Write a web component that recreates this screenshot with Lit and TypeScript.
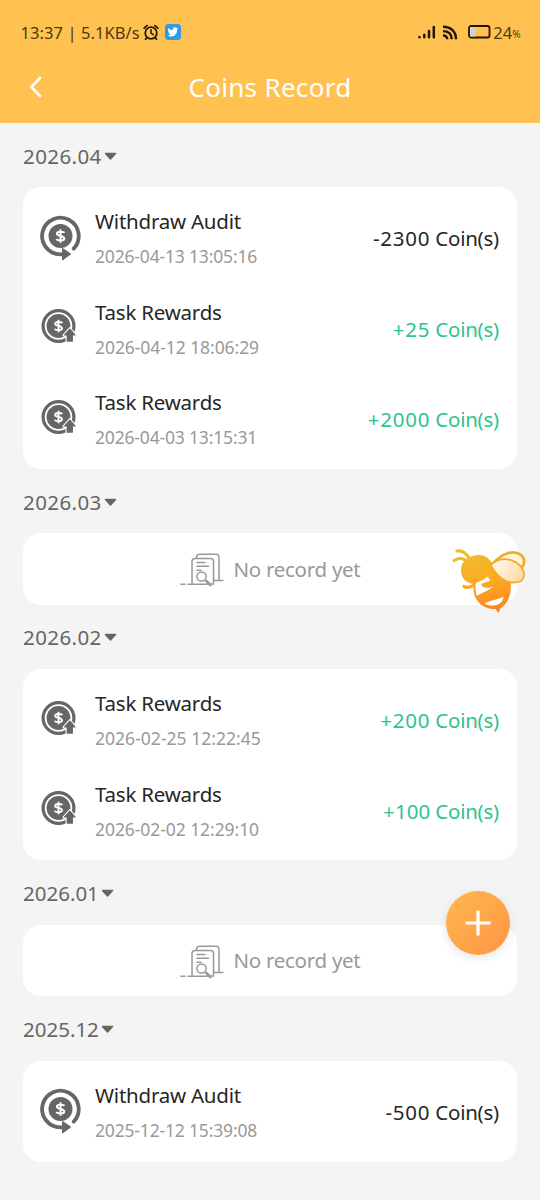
import { LitElement, html, css, svg } from "lit";
import { customElement, property } from "lit/decorators.js";
import { styleMap } from "lit/directives/style-map.js";

interface Entry { kind: "withdraw" | "task"; time: string; amount: number; }
interface Month { label: string; entries: Entry[]; }

const months: Month[] = [
  { label: "2026.04", entries: [
    { kind: "withdraw", time: "2026-04-13 13:05:16", amount: -2300 },
    { kind: "task", time: "2026-04-12 18:06:29", amount: 25 },
    { kind: "task", time: "2026-04-03 13:15:31", amount: 2000 },
  ] },
  { label: "2026.03", entries: [] },
  { label: "2026.02", entries: [
    { kind: "task", time: "2026-02-25 12:22:45", amount: 200 },
    { kind: "task", time: "2026-02-02 12:29:10", amount: 100 },
  ] },
  { label: "2026.01", entries: [] },
  { label: "2025.12", entries: [
    { kind: "withdraw", time: "2025-12-12 15:39:08", amount: -500 },
  ] },
];

// Tightens tracking for every narrow digit "1", giving proportional-looking figures.
const tracking = (text: string, base: number, perOne: number) =>
  styleMap({ letterSpacing: `${(base - perOne * (text.split("1").length - 1)).toFixed(2)}px` });

const dollar = svg`
  <path d="M4.1 -3.2C3.2 -4.6 -3.6 -5.1 -3.6 -2.2C-3.6 .5 3.8 -.6 3.8 2.4C3.8 5.2 -3.2 4.9 -4.2 3.1M0 -6.7V6.7"
    fill="none" stroke="#fff" stroke-width="2"/>`;

const withdrawIcon = html`
  <svg width="44" height="48" viewBox="0 0 44 48">
    <circle cx="22.500" cy="21" r="12" fill="#666"/>
    <g transform="translate(22.500 21)">${dollar}</g>
    <path d="M35.700 33.600A18.300 18.300 0 1 0 22.500 39.300H27" fill="none" stroke="#666" stroke-width="3.800" stroke-linecap="round"/>
    <path d="M24.500 33.400L32.700 39L24.500 45Z" fill="#666" stroke="#666" stroke-width="1" stroke-linejoin="round"/>
  </svg>`;

const taskIcon = html`
  <svg width="44" height="48" viewBox="0 0 44 48">
    <circle cx="20.500" cy="21" r="15.400" fill="none" stroke="#666" stroke-width="3.200"/>
    <circle cx="20.500" cy="21" r="11.900" fill="#666"/>
    <g transform="translate(20.500 21) scale(.93)">${dollar}</g>
    <path d="M31.800 23.500L37.800 30.300H34.800V36.400H28.800V30.300H25.800Z" fill="#666" stroke="#fff" stroke-width="2.600" stroke-linejoin="round" paint-order="stroke"/>
    <path d="M31.800 23.500L37.800 30.300H34.800V36.400H28.800V30.300H25.800Z" fill="#666"/>
  </svg>`;

const emptyIcon = html`
  <svg width="44" height="36" viewBox="0 0 44 36" fill="none" stroke="#999" stroke-width="1.500" stroke-linecap="round" stroke-linejoin="round">
    <path d="M1 32.300H5M8 32.300H27M12 32V9.500Q12 6.500 15 6.500H30.500Q33.500 6.500 33.500 9.500V32H31"/>
    <path d="M16.500 6V5Q16.500 2.300 19.500 2.300H36Q39 2.300 39 5.300V28.400H34M39 28.400H43"/>
    <path d="M17 10.400H25M17 14.200H28.500M17 18.200H21"/>
    <circle cx="21.500" cy="24.500" r="4.600"/>
    <path d="M25 28L26.500 29.300"/><path d="M26.800 29.500L30.300 33" stroke-width="2.800"/>
  </svg>`;

@customElement("status-bar")
class StatusBar extends LitElement {
  static styles = css`
    :host { display: flex; align-items: center; height: 64px; padding: 0 20px 0 20.500px; color: #4d3915;
      font-family: "Noto Sans", "Open Sans", sans-serif; font-size: 16.500px; }
    .clock { letter-spacing: .08px; white-space: pre; }
    .alarm { margin-left: 3px; }
    .bird { margin-left: 6px; }
    .signal { margin-left: auto; }
    .cast { margin-left: 6px; }
    .battery { margin-left: 10px; margin-right: 2px; }
    .pct { font-size: 10px; margin-top: 4px; letter-spacing: -.5px; }
    svg { flex: none; }
  `;
  render() {
    return html`
      <span class="clock">13:37 | 5.1KB/s</span>
      <svg class="alarm" width="16" height="17" viewBox="0 0 16 17" fill="none" stroke="#22190a" stroke-width="1.800" stroke-linecap="round">
        <circle cx="8" cy="9" r="5.800"/><path d="M8 5.800V9.200L10.300 10.600" stroke-width="1.500"/>
        <path d="M1.200 4.200L4 1.600M14.800 4.200L12 1.600M3.700 14L2.600 15.200M12.300 14L13.400 15.200"/>
      </svg>
      <svg class="bird" width="16" height="16" viewBox="0 0 16 16">
        <rect width="16" height="16" rx="3.500" fill="#2d9be8"/>
        <path d="M13.200 4.700L12 5.900C12.200 9.500 9.500 12.400 6 12.400C4.700 12.400 3.500 12 2.700 11.400C4 11.500 5 11.100 5.800 10.500C4.800 10.400 4 9.700 3.700 8.800H4.700C3.700 8.500 3 7.600 3 6.500L4 6.800C3 6 2.800 4.900 3.400 3.900C4.500 5.200 6 6 7.800 6.100C7.400 4.400 8.600 3.200 9.900 3.200C10.600 3.200 11.200 3.500 11.600 3.900L13 3.500L12.200 4.700Z" fill="#fff"/>
      </svg>
      <svg class="signal" width="18" height="14" viewBox="0 0 18 14" stroke="#211707" stroke-width="2.500" stroke-linecap="round">
        <path d="M1.500 12.300V12M6.300 12.300V9.700M11 12.300V6M15.800 12.300V2"/>
      </svg>
      <svg class="cast" width="16" height="15" viewBox="0 0 16 15" fill="none" stroke="#211707" stroke-width="2.400">
        <path d="M1 1.800C9 1.800 14 6.500 14 14.200M1 6.100C6.500 6.100 9.700 9 9.700 14.200M1 10.500C4 10.500 5.300 12 5.300 14.200"/>
      </svg>
      <svg class="battery" width="23" height="14" viewBox="0 0 23 14">
        <rect x="1" y="1" width="20.500" height="11.500" rx="2" fill="#ffc14f" stroke="#211707" stroke-width="1.800"/>
        <rect x="2" y="2" width="5.500" height="9.500" fill="#d5d1c6"/>
      </svg>
      <span>24</span><span class="pct">%</span>`;
  }
}

@customElement("record-row")
class RecordRow extends LitElement {
  @property({ attribute: false }) entry!: Entry;
  static styles = css`
    :host { display: flex; align-items: center; height: 90.350px; }
    .icon { height: 48px; margin: 2px 13px 0 0; flex: none; }
    .text { display: flex; flex-direction: column; gap: 8px; flex: 1; padding-top: 1px; }
    .name { font-size: 20.500px; line-height: 28px; color: #262626; letter-spacing: -.23px; }
    .time { font-size: 17.500px; line-height: 26px; color: #999; }
    .amount { font-size: 20.500px; line-height: 28px; color: #262626; margin-top: 1px; letter-spacing: -.25px; }
    .gain { color: #2dc48b; }
  `;
  render() {
    const { kind, time, amount } = this.entry;
    const figure = `${amount > 0 ? "+" : ""}${amount}`;
    return html`
      <div class="icon">${kind === "withdraw" ? withdrawIcon : taskIcon}</div>
      <div class="text">
        <span class="name">${kind === "withdraw" ? "Withdraw Audit" : "Task Rewards"}</span>
        <span class="time" style=${tracking(time, 0.13, 0.1)}>${time}</span>
      </div>
      <span class="amount ${amount > 0 ? "gain" : ""}"><span style=${tracking(figure, 0.75, 0.7)}>${figure}</span> Coin(s)</span>`;
  }
}

@customElement("app-root")
class AppRoot extends LitElement {
  static styles = css`
    :host { display: block; position: relative; height: 1200px; overflow: hidden; background: #f4f4f4;
      font-family: "Noto Sans", "Open Sans", sans-serif; }
    header { height: 123px; background: #ffc14f; }
    .nav { display: grid; grid-template-columns: 72px 1fr 72px; align-items: center; height: 46px; }
    .back { margin-left: 28px; display: block; }
    h1 { margin: -1px 0 0; text-align: center; color: #fff; font-size: 26px; line-height: 36px; font-weight: 400; letter-spacing: .3px; }
    main { padding: 0 23px; }
    .month { display: flex; align-items: center; gap: 2.500px; height: 62.400px; padding-top: 2px; color: #666; font-size: 20.500px; line-height: 28px; }
    .month span { margin-top: -1px; }
    .card { background: #fff; border-radius: 18px; padding: 5.300px 18px 5.300px 15px; }
    .empty { display: flex; align-items: center; justify-content: center; gap: 10px; height: 71.400px; padding: 0; color: #999; font-size: 20.500px; letter-spacing: -.28px; }
    .empty svg { margin-top: 2px; }
    .empty span { margin-top: -1px; }
    .bee { position: absolute; left: 450px; top: 545px; }
    .add { position: absolute; left: 446px; top: 891px; width: 64px; height: 64px; border: 0; padding: 0; border-radius: 50%;
      background: linear-gradient(135deg, #ffb94d, #ff9446); box-shadow: 0 3px 10px rgba(0,0,0,.1); }
    .add svg { display: block; margin: auto; }
  `;
  render() {
    return html`
      <header>
        <status-bar></status-bar>
        <div class="nav">
          <svg class="back" width="16" height="22" viewBox="0 0 16 22" fill="none" stroke="#fff" stroke-width="2.600" stroke-linecap="round" stroke-linejoin="round"><path d="M12 2L3.300 11L12 20"/></svg>
          <h1>Coins Record</h1>
        </div>
      </header>
      <main>
        ${months.map((m) => html`
          <div class="month"><span style=${tracking(m.label, 0.4, 0.4)}>${m.label}</span>
            <svg width="13" height="9" viewBox="0 0 13 9"><path d="M1.500 1.500H11.500L6.500 7Z" fill="#666" stroke="#666" stroke-width="1.500" stroke-linejoin="round"/></svg>
          </div>
          ${m.entries.length
            ? html`<section class="card">${m.entries.map((e) => html`<record-row .entry=${e}></record-row>`)}</section>`
            : html`<section class="card empty">${emptyIcon}<span>No record yet</span></section>`}`)}
      </main>
      <svg class="bee" width="78" height="70" viewBox="0 0 78 70">
        <defs>
          <linearGradient id="body" gradientUnits="userSpaceOnUse" x1="30" y1="5" x2="42" y2="66"><stop stop-color="#efbd2b"/><stop offset=".5" stop-color="#fbab24"/><stop offset="1" stop-color="#ff8519"/></linearGradient>
          <linearGradient id="wing" x1="0" y1=".2" x2="1" y2=".8"><stop stop-color="#fffaf0"/><stop offset="1" stop-color="#ffd9a0"/></linearGradient>
        </defs>
        <path d="M7 6C12 5 16 8 19 13M4 15.500C9 12.500 14 13 17 17M14 41.500C17 43 20 42.500 24 40" fill="none" stroke="url(#body)" stroke-width="3.200" stroke-linecap="round"/>
        <path d="M11 25C11 15 20 10 29 10C36 10 41 15 43 20L60 34C63 47 58 59 50.500 63L48.500 68L45.500 64C31 64 22 54 23.500 39C16 38 11 33 11 25Z" fill="url(#body)"/>
        <path d="M26 38C31 36 35 34 38 31.500L40 36C36 37 32 38 31 40C34 43.500 39 43.500 43 41.500C39 46 32 47 27 51C25.500 47 25 42 26 38ZM34.500 58.500C40 55 48 55 53.500 51.500C53 57 49 60.500 43 60.500C39 60.500 36 60 34.500 58.500Z" fill="#fff"/>
        <path d="M42 20C52 7 64 5 71 10C75 13 75 19 72 22" fill="#fff4dc" stroke="#f3ad24" stroke-width="2.800"/>
        <path d="M41 20C49 12 59 13 67 18C75 24 76 32 71 36C60 41 48 34 41 20Z" fill="url(#wing)" stroke="#f5aa24" stroke-width="1.600"/>
      </svg>
      <button class="add" aria-label="Add">
        <svg width="28" height="28" viewBox="0 0 28 28" stroke="#fff" stroke-width="3.200"><path d="M14 1.500V26.500M1.500 14H26.500"/></svg>
      </button>`;
  }
}
